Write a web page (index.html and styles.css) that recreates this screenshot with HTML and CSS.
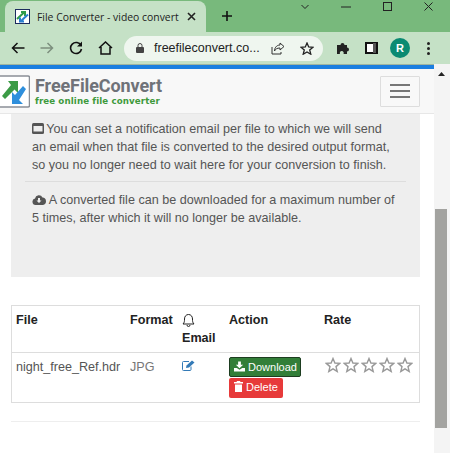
FILE: index.html
```html
<!DOCTYPE html>
<html lang="en">
<head>
  <meta charset="UTF-8">
  <title>File Converter</title>
  <link rel="stylesheet" href="styles.css">
</head>
<body>
  <div class="tabstrip">
    <div class="tab">
      <svg class="favicon" width="15" height="15" viewBox="0 0 15 15">
        <rect x="0.5" y="0.5" width="14" height="14" fill="#fff" stroke="#1d2c5e"/>
        <path d="M2 10 L9 3.5 M6 3 H10 V7" fill="none" stroke="#2f9a4a" stroke-width="2"/>
        <path d="M13 5.5 L6 12 M9 12.5 H5 V8.5" fill="none" stroke="#2a7fd0" stroke-width="2"/>
      </svg>
      <span class="tab-title">File Converter - video convert</span>
      <svg class="tab-close" width="9" height="9" viewBox="0 0 9 9"><path d="M1 1 L8 8 M8 1 L1 8" stroke="#222" stroke-width="1.6"/></svg>
    </div>
    <svg class="new-tab" width="12" height="12" viewBox="0 0 12 12"><path d="M6 1 V11 M1 6 H11" stroke="#111" stroke-width="1.6"/></svg>
    <div class="win-controls">
      <svg width="8" height="6" viewBox="0 0 8 6"><path d="M0.5 1 L4 4.5 L7.5 1" fill="none" stroke="#222"/></svg>
      <svg width="10" height="2" viewBox="0 0 10 2"><path d="M0 1 H10" stroke="#222"/></svg>
      <svg width="9" height="9" viewBox="0 0 9 9"><rect x="0.5" y="0.5" width="8" height="8" fill="none" stroke="#222"/></svg>
      <svg width="9" height="9" viewBox="0 0 9 9"><path d="M0.5 0.5 L8.5 8.5 M8.5 0.5 L0.5 8.5" stroke="#222"/></svg>
    </div>
  </div>

  <div class="toolbar">
    <svg class="tool" width="14" height="12" viewBox="0 0 14 12"><path d="M13.5 6 H1.5 M6.5 1 L1.5 6 L6.5 11" fill="none" stroke="#111" stroke-width="1.5"/></svg>
    <svg class="tool" width="14" height="12" viewBox="0 0 14 12"><path d="M0.5 6 H12.5 M7.5 1 L12.5 6 L7.5 11" fill="none" stroke="#7d8f7e" stroke-width="1.5"/></svg>
    <svg class="tool" width="14" height="14" viewBox="0 0 14 14"><path d="M12 4.5 A5.5 5.5 0 1 0 12.5 8" fill="none" stroke="#111" stroke-width="1.6"/><path d="M13 0.5 V5.5 H8 Z" fill="#111"/></svg>
    <svg class="tool" width="15" height="14" viewBox="0 0 15 14"><path d="M1 7 L7.5 1 L14 7 M3 6 V13 H12 V6" fill="none" stroke="#111" stroke-width="1.5"/></svg>
    <div class="omnibox">
      <svg width="8" height="10" viewBox="0 0 8 10"><rect x="0" y="4" width="8" height="6" rx="1" fill="#444"/><path d="M2 4 V2.5 A2 2 0 0 1 6 2.5 V4" fill="none" stroke="#444"/></svg>
      <span class="url">freefileconvert.co...</span>
      <svg class="omni-share" width="14" height="13" viewBox="0 0 14 13"><path d="M9 1 L13 4.5 L9 8 V6 C6 6 4.5 7 3.5 9 C3.5 6 5.5 3 9 3 Z M1 5 V12 H10 V10" fill="none" stroke="#333"/></svg>
      <svg width="14" height="13" viewBox="0 0 14 13"><path d="M7 1 L8.7 5 L13 5.3 L9.7 8 L10.8 12.2 L7 10 L3.2 12.2 L4.3 8 L1 5.3 L5.3 5 Z" fill="none" stroke="#222" stroke-width="1.3"/></svg>
    </div>
    <svg class="ext" width="14" height="14" viewBox="0 0 14 14"><path d="M1 4 H4.5 A2 2 0 1 1 8.5 4 H11 V6.5 A2 2 0 1 1 11 10.5 V13 H7.5 A2 2 0 1 0 4 13 H1 Z" fill="#222"/></svg>
    <svg class="side" width="13" height="12" viewBox="0 0 13 12"><rect x="1" y="1" width="11" height="10" fill="#fff" stroke="#111" stroke-width="2"/><rect x="8" y="1" width="3" height="10" fill="#555"/></svg>
    <div class="avatar">R</div>
    <div class="kebab"><i></i><i></i><i></i></div>
  </div>

  <div class="main">
    <div class="viewport">
      <div class="progress"></div>
      <nav class="navbar">
        <div class="brand">
          <svg class="logo-mark" width="30" height="33" viewBox="0 0 30 33">
            <path d="M-1 1 H28 Q29.5 1 29.5 2.5 V30.5 Q29.5 32 28 32 H-1 Z" fill="#fff" stroke="#8a8f96" stroke-width="1.5"/>
            <path d="M2 21 L5 24 L14.5 14.5 L18 18 V6 H8 L11 10 Z" fill="#3c9b46"/>
            <path d="M26 14 L23 11 L15 20 L12 17 V29 H23 L19 25 Z" fill="#2f8fdc"/>
          </svg>
          <div class="brand-text">
            <div class="brand-name">FreeFileConvert</div>
            <div class="brand-tag">free online file converter</div>
          </div>
        </div>
        <button class="nav-toggle"><i></i><i></i><i></i></button>
      </nav>

      <div class="content">
        <div class="well">
          <p>
            <svg class="well-icon icon-mail" width="12" height="11" viewBox="0 0 12 11"><rect x="0" y="0" width="12" height="11" rx="1.5" fill="#555"/><rect x="1.5" y="3" width="9" height="5.5" fill="#eee"/></svg>
            You can set a notification email per file to which we will send an email when that file is converted to the desired output format, so you no longer need to wait here for your conversion to finish.
          </p>
          <hr class="well-rule">
          <p>
            <svg class="well-icon" width="14" height="11" viewBox="0 0 14 11"><path d="M3.5 11 A3.3 3.3 0 0 1 3 4.5 A4 4 0 0 1 10.5 3.5 A3.8 3.8 0 0 1 11 11 Z" fill="#555"/><path d="M6 4 H8 V6.5 H9.5 L7 9 L4.5 6.5 H6 Z" fill="#eee"/></svg>
            A converted file can be downloaded for a maximum number of 5 times, after which it will no longer be available.
          </p>
        </div>

        <table class="files">
          <tr>
            <th class="col-file">File</th>
            <th class="col-format">Format</th>
            <th class="col-email">
              <svg class="bell" width="13" height="14" viewBox="0 0 13 14"><path d="M1 11 C2.5 9.5 2.5 8 2.5 6 C2.5 3.5 4 1.5 6.5 1.5 C9 1.5 10.5 3.5 10.5 6 C10.5 8 10.5 9.5 12 11 Z M5 12 A1.5 1.5 0 0 0 8 12" fill="none" stroke="#222"/></svg><br>Email
            </th>
            <th class="col-action">Action</th>
            <th>Rate</th>
          </tr>
          <tr>
            <td>night_free_Ref.hdr</td>
            <td class="format">JPG</td>
            <td>
              <svg class="edit" width="13" height="11" viewBox="0 0 13 11"><path d="M9 6.5 V9.5 Q9 10.5 8 10.5 H1.5 Q0.5 10.5 0.5 9.5 V2.5 Q0.5 1.5 1.5 1.5 H7" fill="none" stroke="#337ab7"/><path d="M4 8 L4.5 5.5 L10 0.5 L12.5 2.5 L7 7.5 Z" fill="#337ab7"/></svg>
            </td>
            <td class="actions">
              <a class="btn btn-download">
                <svg width="11" height="11" viewBox="0 0 12 11"><path d="M4.5 0 H7.5 V3.5 H10 L6 7.5 L2 3.5 H4.5 Z M0 7 H3 L6 9 L9 7 H12 V11 H0 Z" fill="#fff"/></svg>
                Download
              </a>
              <a class="btn btn-delete">
                <svg width="9" height="11" viewBox="0 0 9 11"><path d="M3 0 H6 L6.5 1 H9 V2.5 H0 V1 H2.5 Z M1 3.5 H8 V11 H1 Z" fill="#fff"/></svg>
                Delete
              </a>
            </td>
            <td class="stars">
              <svg width="16" height="16" viewBox="0 0 16 16"><path d="M8 1.5 L9.9 6 L14.7 6.4 L11 9.6 L12.2 14.4 L8 11.8 L3.8 14.4 L5 9.6 L1.3 6.4 L6.1 6 Z" fill="#fff" stroke="#999" stroke-width="1.4"/></svg>
              <svg width="16" height="16" viewBox="0 0 16 16"><path d="M8 1.5 L9.9 6 L14.7 6.4 L11 9.6 L12.2 14.4 L8 11.8 L3.8 14.4 L5 9.6 L1.3 6.4 L6.1 6 Z" fill="#fff" stroke="#999" stroke-width="1.4"/></svg>
              <svg width="16" height="16" viewBox="0 0 16 16"><path d="M8 1.5 L9.9 6 L14.7 6.4 L11 9.6 L12.2 14.4 L8 11.8 L3.8 14.4 L5 9.6 L1.3 6.4 L6.1 6 Z" fill="#fff" stroke="#999" stroke-width="1.4"/></svg>
              <svg width="16" height="16" viewBox="0 0 16 16"><path d="M8 1.5 L9.9 6 L14.7 6.4 L11 9.6 L12.2 14.4 L8 11.8 L3.8 14.4 L5 9.6 L1.3 6.4 L6.1 6 Z" fill="#fff" stroke="#999" stroke-width="1.4"/></svg>
              <svg width="16" height="16" viewBox="0 0 16 16"><path d="M8 1.5 L9.9 6 L14.7 6.4 L11 9.6 L12.2 14.4 L8 11.8 L3.8 14.4 L5 9.6 L1.3 6.4 L6.1 6 Z" fill="#fff" stroke="#999" stroke-width="1.4"/></svg>
            </td>
          </tr>
        </table>
        <hr class="page-rule">
      </div>
    </div>
    <div class="scrollbar">
      <svg class="scroll-up" width="7" height="4" viewBox="0 0 7 4"><path d="M0 4 L3.5 0 L7 4 Z" fill="#222"/></svg>
      <div class="scroll-thumb"></div>
    </div>
  </div>
</body>
</html>
```

FILE: styles.css
```css
html, body {
  margin: 0;
  height: 453px;
  overflow: hidden;
}

body {
  font-family: 'Liberation Sans', Arial, sans-serif;
  font-size: 12.6px;
  color: #333;
  background-color: #fff;
  display: flex;
  flex-direction: column;
}

/* browser chrome */
.tabstrip {
  height: 32px;
  flex: none;
  background-color: #78b97c;
  display: flex;
  align-items: flex-end;
  padding-left: 5px;
}

.tab {
  width: 201px;
  height: 31px;
  box-sizing: border-box;
  padding: 0 10px 0 10px;
  background-color: #c5e1c6;
  border-radius: 8px 8px 0 0;
  display: flex;
  align-items: center;
  font-family: 'Open Sans', sans-serif;
  font-size: 10.4px;
  color: #222;
}

.favicon {
  flex: none;
}

.tab-title {
  flex: 1;
  margin-left: 7px;
  white-space: nowrap;
}

.tab-close {
  flex: none;
}

.new-tab {
  margin: 0 0 10px 15px;
}

.win-controls {
  margin-left: auto;
  align-self: flex-start;
  display: flex;
  align-items: center;
  gap: 32px;
  height: 13px;
  padding-right: 17px;
}

.toolbar {
  height: 32px;
  flex: none;
  background-color: #c5e1c6;
  display: flex;
  align-items: center;
  padding-left: 11px;
}

.tool {
  margin-right: 15px;
  flex: none;
}

.omnibox {
  width: 199px;
  height: 25px;
  flex: none;
  box-sizing: border-box;
  margin-left: -4px;
  padding: 0 9px 0 12px;
  background-color: #eff6ef;
  border-radius: 13px;
  display: flex;
  align-items: center;
  font-size: 12.5px;
  color: #222;
}

.url {
  margin-left: 10px;
  white-space: nowrap;
  flex: 1;
}

.omni-share {
  margin-right: 15px;
}

.ext {
  margin-left: 13px;
}

.side {
  margin-left: 15px;
}

.avatar {
  width: 20px;
  height: 20px;
  margin-left: 12px;
  border-radius: 50%;
  background-color: #0b8a72;
  color: #fff;
  font-size: 11px;
  font-weight: bold;
  text-align: center;
  line-height: 20px;
}

.kebab {
  margin-left: 17px;
  display: flex;
  flex-direction: column;
  gap: 2px;
}

.kebab i {
  width: 3px;
  height: 3px;
  border-radius: 50%;
  background-color: #222;
}

/* page */
.main {
  flex: 1;
  display: flex;
  min-height: 0;
}

.viewport {
  width: 434px;
  flex: none;
  overflow: hidden;
}

.progress {
  height: 5px;
  background-color: #1a7fe0;
  border-top: 1px solid #9fb5a0;
  box-sizing: border-box;
}

.navbar {
  height: 45px;
  box-sizing: border-box;
  background-color: #f8f8f8;
  border-bottom: 1px solid #e7e7e7;
  display: flex;
  align-items: center;
  justify-content: space-between;
  padding: 0 14px 0 0;
}

.brand {
  display: flex;
  align-items: center;
}

.logo-mark {
  flex: none;
}

.brand-text {
  margin-left: 5px;
}

.brand-name {
  font-family: Roboto, sans-serif;
  font-size: 18px;
  font-weight: bold;
  line-height: 21px;
  letter-spacing: -0.1px;
  color: #6f7278;
}

.brand-tag {
  font-family: 'DejaVu Sans', sans-serif;
  font-size: 8.7px;
  font-weight: bold;
  line-height: 11px;
  letter-spacing: 0.1px;
  color: #3e9a3c;
}

.nav-toggle {
  width: 40px;
  height: 31px;
  box-sizing: border-box;
  padding: 0;
  border: 1px solid #ddd;
  background: transparent;
  border-radius: 1px;
  display: flex;
  flex-direction: column;
  align-items: center;
  justify-content: center;
  gap: 4px;
}

.nav-toggle i {
  width: 20px;
  height: 2px;
  background-color: #777;
}

.content {
  padding: 0 14px 0 11px;
}

.well {
  height: 163px;
  box-sizing: border-box;
  padding: 6px 23px 0 21px;
  background-color: #eee;
  color: #555;
  line-height: 18px;
}

.well p {
  margin: 0;
}

.well-icon {
  vertical-align: -1px;
}

.icon-mail {
  margin-right: -1px;
}

.well-rule {
  margin: 7px -9px 9px -7px;
  border: 0;
  border-top: 1px solid #ddd;
}

.files {
  width: 409px;
  margin-top: 28px;
  border-collapse: collapse;
  border: 1px solid #ddd;
  line-height: 18px;
  background-color: #fff;
}

.files th,
.files td {
  padding: 5px 4px;
  text-align: left;
  vertical-align: top;
  font-size: 12.6px;
}

.files th {
  color: #222;
  border-bottom: 1px solid #ddd;
}

.files td {
  color: #555;
}

.files td.format {
  color: #777;
}

.col-file { width: 106px; }
.col-format { width: 44px; }
.col-email { width: 39px; }
.col-action { width: 87px; }

.bell,
.edit {
  display: inline-block;
  vertical-align: top;
  margin-top: 2px;
}

.files td.actions {
  padding: 4px 4px 4px;
}

.btn {
  display: block;
  width: fit-content;
  box-sizing: border-box;
  height: 20px;
  border-radius: 2px;
  color: #fff;
  font-size: 11px;
  line-height: 19px;
  white-space: nowrap;
}

.btn svg {
  vertical-align: -1px;
}

.btn-download {
  background-color: #327e38;
  border: 1px solid #1d3d20;
  margin-bottom: 1px;
  padding: 0 3px 0 4px;
  line-height: 18px;
}

.btn-delete {
  background-color: #e73a3a;
  padding: 0 5px;
}

.files td.stars {
  white-space: nowrap;
  padding: 4px 0 0 5px;
  font-size: 0;
}

.stars svg {
  margin-right: 2px;
}

.page-rule {
  margin: 18px 0 0;
  border: 0;
  border-top: 1px solid #eee;
  width: 409px;
}

/* scrollbar */
.scrollbar {
  flex: 1;
  background-color: #f4f4f4;
  position: relative;
}

.scroll-up {
  position: absolute;
  top: 8px;
  left: 4px;
}

.scroll-thumb {
  position: absolute;
  top: 145px;
  left: 1px;
  width: 12px;
  height: 219px;
  background-color: #a3a3a0;
}
```
